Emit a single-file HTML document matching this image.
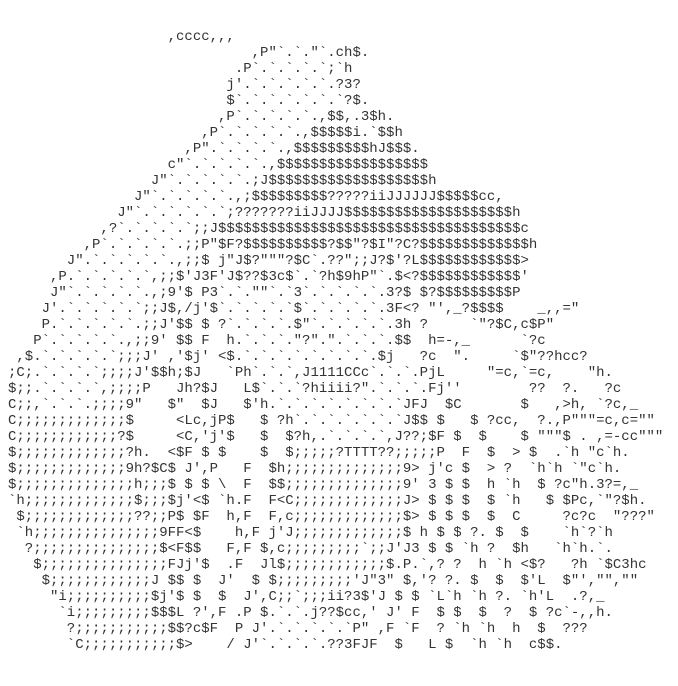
<!DOCTYPE html>
<html><head><meta charset="utf-8"><style>
html,body{margin:0;padding:0;background:#fff;width:678px;height:686px;overflow:hidden}
pre{position:absolute;left:8px;top:29px;margin:0;font-family:"Liberation Mono","DejaVu Sans Mono",monospace;font-size:14px;line-height:16px;color:#333;white-space:pre}
</style></head><body><pre>                   ,cccc,,,
                             ,P"`.`."`.ch$.
                           .P`.`.`.`.`;`h
                          j'.`.`.`.`.`.?3?
                          $`.`.`.`.`.`.`?$.
                         ,P`.`.`.`.`.,$$,.3$h.
                       ,P`.`.`.`.`.,$$$$$i.`$$h
                     ,P".`.`.`.`.,$$$$$$$$$hJ$$$.
                   c"`.`.`.`.`.,$$$$$$$$$$$$$$$$$$
                 J"`.`.`.`.`.;J$$$$$$$$$$$$$$$$$$$h
               J"`.`.`.`.`.,;$$$$$$$$$?????iiJJJJJJ$$$$$cc,
             J"`.`.`.`.`.`;???????iiJJJJ$$$$$$$$$$$$$$$$$$$$h
           ,?`.`.`.`.`;;J$$$$$$$$$$$$$$$$$$$$$$$$$$$$$$$$$$$$c
         ,P`.`.`.`.`.;;P"$F?$$$$$$$$$$?$$"?$I"?C?$$$$$$$$$$$$$h
       J".`.`.`.`.`.,;;$ j"J$?"""?$C`.??";;J?$'?L$$$$$$$$$$$$&gt;
     ,P.`.`.`.`.`,;;$'J3F'J$??$3c$`.`?h$9hP"`.$&lt;?$$$$$$$$$$$$'
     J"`.`.`.`.`.,;9'$ P3`.`.""`.`3`.`.`.`.`.3?$ $?$$$$$$$$$P
    J'.`.`.`.`.`;;J$,/j'$`.`.`.`.`$`.`.`.`.`.3F&lt;? "',_?$$$$    _,,="
    P.`.`.`.`.`.;;J'$$ $ ?`.`.`.`.$"`.`.`.`.`.3h ?     `"?$C,c$P"
   P`.`.`.`.`.,;;9' $$ F  h.`.`.`."?".".`.`.`.$$  h=-,_      `?c
 ,$.`.`.`.`.`;;;J' ,'$j' &lt;$.`.`.`.`.`.`.`.`.$j   ?c  ".     `$"??hcc?
;C;.`.`.`.`;;;;J'$$h;$J   `Ph`.`.`,J1111CCc`.`.`.PjL     "=c,`=c,    "h.
$;;.`.`.`.`,;;;;P   Jh?$J   L$`.`.`?hiiii?".`.`.`.Fj''        ??  ?.   ?c
C;;,`.`.`.;;;;9"   $"  $J   $'h.`.`.`.`.`.`.`.`JFJ  $C       $   ,&gt;h, `?c,_
C;;;;;;;;;;;;;$     &lt;Lc,jP$   $ ?h`.`.`.`.`.`.`J$$ $   $ ?cc,  ?.,P"""=c,c=""
C;;;;;;;;;;;;?$     &lt;C,'j'$   $  $?h,.`.`.`.`,J??;$F $  $    $ """$ . ,=-cc"""
$;;;;;;;;;;;;;?h.  &lt;$F $ $    $  $;;;;;?TTTT??;;;;;P  F  $  &gt; $  .`h "c`h.
$;;;;;;;;;;;;;9h?$C$ J',P   F  $h;;;;;;;;;;;;;;9&gt; j'c $  &gt; ?  `h`h `"c`h.
$;;;;;;;;;;;;;;h;;;$ $ $ \  F  $$;;;;;;;;;;;;;;9' 3 $ $  h `h  $ ?c"h.3?=,_
`h;;;;;;;;;;;;;$;;;$j'&lt;$ `h.F  F&lt;C;;;;;;;;;;;;;J&gt; $ $ $  $ `h   $ $Pc,`"?$h.
 $;;;;;;;;;;;;;??;;P$ $F  h,F  F,c;;;;;;;;;;;;;$&gt; $ $ $  $  C     ?c?c  "???"
 `h;;;;;;;;;;;;;;;9FF&lt;$    h,F j'J;;;;;;;;;;;;;$ h $ $ ?. $  $    `h`?`h
  ?;;;;;;;;;;;;;;;$&lt;F$$   F,F $,c;;;;;;;;;`;;J'J3 $ $ `h ?  $h   `h`h.`.
   $;;;;;;;;;;;;;;;FJj'$  .F  Jl$;;;;;;;;;;;;$.P.`,? ?  h `h &lt;$?   ?h `$C3hc
    $;;;;;;;;;;;;J $$ $  J'  $ $;;;;;;;;;'J"3" $,'? ?. $  $  $'L  $"',"",""
     "i;;;;;;;;;;$j'$ $  $  J',C;;`;;;ii?3$'J $ $ `L`h `h ?. `h'L  .?,_
      `i;;;;;;;;;$$$L ?',F .P $.`.`.j??$cc,' J' F  $ $  $  ?  $ ?c`-,,h.
       ?;;;;;;;;;;;$$?c$F  P J'.`.`.`.`.`P" ,F `F  ? `h `h  h  $  ???
       `C;;;;;;;;;;;$&gt;    / J'`.`.`.`.??3FJF  $   L $  `h `h  c$$.</pre></body></html>
